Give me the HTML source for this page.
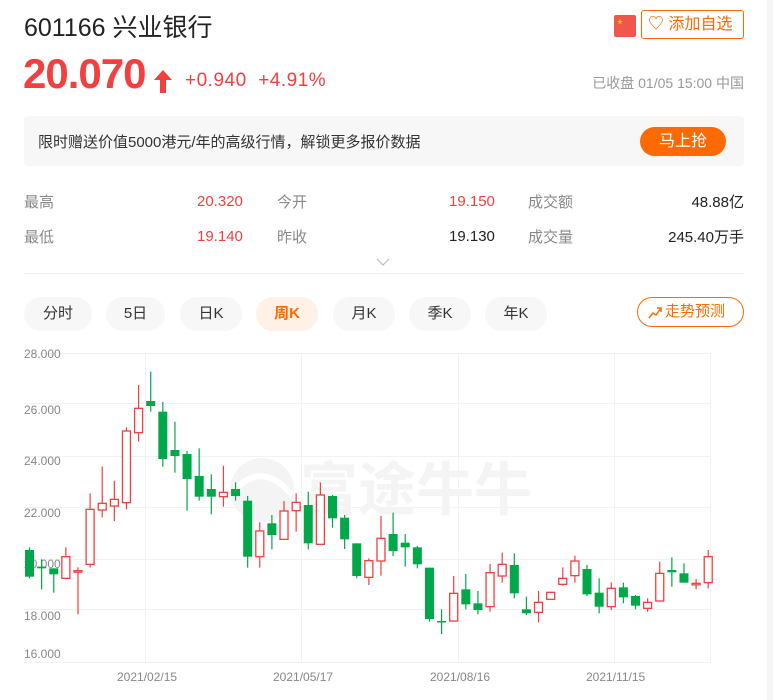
<!DOCTYPE html>
<html><head><meta charset="utf-8"><style>
*{margin:0;padding:0;box-sizing:border-box}
body{width:773px;height:700px;background:#fff;font-family:"Liberation Sans","Noto Sans CJK SC",sans-serif;position:relative;overflow:hidden;color:#333}
.a{position:absolute;white-space:nowrap}
.pill{position:absolute;top:297px;height:34px;border-radius:17px;background:#f7f7f7;font-size:15px;color:#333;text-align:center;line-height:34px}
</style></head><body>
<div style="position:absolute;right:0;top:0;width:6px;height:700px;background:#f5f5f5"></div>
<div class="a" style="left:24px;top:8px;font-size:25px;color:#222">601166 兴业银行</div>
<div class="a" style="left:614px;top:15px;width:22px;height:22px;background:#f0564a;border-radius:2px"><span style="position:absolute;left:3px;top:2px;color:#ffd200;font-size:6px">★</span></div>
<div class="a" style="left:641px;top:10px;width:103px;height:29px;border:1px solid #ff6a00;border-radius:3px;color:#ff6a00;font-size:16px;line-height:27px;padding-left:6px">♡ 添加自选</div>
<div class="a" style="left:23px;top:50px;font-size:42px;font-weight:bold;color:#f23f3f;letter-spacing:-1px">20.070</div>
<svg class="a" style="left:154px;top:70px" width="18" height="23"><path d="M9 0 L18 10 H12 V23 H6 V10 H0 Z" fill="#f23f3f"/></svg>
<div class="a" style="left:185px;top:70px;font-size:19px;color:#f23f3f;letter-spacing:0.5px">+0.940 &nbsp;+4.91%</div>
<div class="a" style="right:29px;top:73px;font-size:14px;color:#999">已收盘 01/05 15:00 中国</div>
<div class="a" style="left:24px;top:116px;width:720px;height:50px;background:#f7f7f7;border-radius:4px"></div>
<div class="a" style="left:38px;top:131px;font-size:15px;color:#333">限时赠送价值5000港元/年的高级行情，解锁更多报价数据</div>
<div class="a" style="left:640px;top:127px;width:86px;height:29px;background:#ff6a00;border-radius:15px;color:#fff;font-size:16px;text-align:center;line-height:29px">马上抢</div>
<div class="a" style="left:24px;top:191px;font-size:15px;color:#888">最高</div>
<div class="a" style="left:24px;top:226px;font-size:15px;color:#888">最低</div>
<div class="a" style="left:197px;top:193px;font-size:15px;color:#f23f3f">20.320</div>
<div class="a" style="left:197px;top:228px;font-size:15px;color:#f23f3f">19.140</div>
<div class="a" style="left:277px;top:191px;font-size:15px;color:#888">今开</div>
<div class="a" style="left:277px;top:226px;font-size:15px;color:#888">昨收</div>
<div class="a" style="left:449px;top:193px;font-size:15px;color:#f23f3f">19.150</div>
<div class="a" style="left:449px;top:228px;font-size:15px;color:#222">19.130</div>
<div class="a" style="left:528px;top:191px;font-size:15px;color:#888">成交额</div>
<div class="a" style="left:528px;top:226px;font-size:15px;color:#888">成交量</div>
<div class="a" style="right:29px;top:191px;font-size:15px;color:#222">48.88亿</div>
<div class="a" style="right:29px;top:226px;font-size:15px;color:#222">245.40万手</div>
<svg class="a" style="left:376px;top:258px" width="14" height="9"><path d="M1 1 L7 7 L13 1" fill="none" stroke="#bbb" stroke-width="1.2"/></svg>
<div class="a" style="left:24px;top:273px;width:720px;height:1px;background:#eee"></div>
<div class="pill" style="left:24px;width:68px">分时</div>
<div class="pill" style="left:106px;width:59px">5日</div>
<div class="pill" style="left:180px;width:62px">日K</div>
<div class="pill" style="left:256px;width:62px;background:#fff1e6;color:#ff6a00;font-weight:bold">周K</div>
<div class="pill" style="left:333px;width:62px">月K</div>
<div class="pill" style="left:409px;width:62px">季K</div>
<div class="pill" style="left:485px;width:62px">年K</div>
<div class="a" style="left:637px;top:297px;width:107px;height:30px;border:1px solid #ff6a00;border-radius:15px;color:#ff6a00;font-size:15px;line-height:28px;padding-left:27px">走势预测</div>
<svg class="a" style="left:648px;top:305px" width="14" height="14"><path d="M1 13 L5 8 L8 10 L13 3 M9 3 H13 V7" fill="none" stroke="#ff6a00" stroke-width="1.5"/></svg>
<svg id="ch" class="a" style="left:0;top:340px" width="773" height="360"></svg>
<script>
var s='';
var H=[13,63,116,167,219,269,322];
H.forEach(function(y){s+='<line x1="24" x2="710" y1="'+(y+.5)+'" y2="'+(y+.5)+'" stroke="#f2f2f2"/>';});
[145,301,458,614,710].forEach(function(x){s+='<line y1="13" y2="322" x1="'+(x+.5)+'" x2="'+(x+.5)+'" stroke="#f2f2f2"/>';});
s+='<circle cx="262" cy="150" r="32" fill="#f4f4f4"/><path d="M235 150 Q262 120 292 155" stroke="#fff" stroke-width="6" fill="none"/>';
s+='<text x="300" y="170" font-size="58" fill="#f4f4f4" font-family="Noto Sans CJK SC,sans-serif" font-weight="bold">富途牛牛</text>';
var L=[["28.000",18],["26.000",74],["24.000",125],["22.000",177],["20.000",228],["18.000",280],["16.000",318]];
L.forEach(function(l){s+='<text x="24" y="'+l[1]+'" font-size="12" fill="#888" font-family="Liberation Sans">'+l[0]+'</text>';});
[["2021/02/15",117],["2021/05/17",273],["2021/08/16",430],["2021/11/15",586]].forEach(function(t){s+='<text x="'+t[1]+'" y="341" font-size="12" fill="#888" font-family="Liberation Sans">'+t[0]+'</text>';});
var D=[
"g,622,715,630,710","g,658,748,680,685","g,685,758,685,703","r,622,718,650,715","r,682,823,692,696","r,460,683,508,673","r,380,532,490,510","r,422,543,478,498","r,262,508,273,488","r,135,305,205,278",
"g,95,215,183,198","g,186,380,215,357","g,245,398,330,348","g,333,512,342,417","g,325,482,408,470","g,403,523,447,470","r,377,500,457,470","g,427,482,447,468","g,468,683,482,650","r,547,683,573,650",
"g,525,628,550,585","r,483,598,513,598","r,460,575,487,512","g,455,628,495,610","r,427,613,465,613","g,465,563,468,535","g,525,627,533,598","g,610,715,610,708","r,655,735,662,712","r,528,707,595,663",
"g,518,648,582,633","g,582,680,608,622","g,618,685,622,673","g,683,845,683,837","g,808,882,843,847","r,708,845,760,843","g,702,808,748,793","g,753,823,790,810","r,672,815,698,800","r,638,728,673,708",
"g,640,775,675,760","g,770,825,808,820","r,753,847,787,817","r,755,778,757,778","r,682,737,715,733","r,647,728,663,707","g,675,768,687,763","g,715,820,758,800","r,727,810,745,800","g,728,790,742,772",
"g,765,808,768,797","r,775,815,787,805","r,665,783,700,783","g,652,740,690,697","g,670,728,700,728","r,717,748,730,733","r,630,745,650,728"];
D.forEach(function(d,i){var p=d.split(',');var c=p[0]=='g'?'#00a84a':'#f23f3f';var x=29.5+12.12*i;
var f=function(v){return (+v)/3;};var wt=f(p[1]),wb=f(p[2]),bt=f(p[3]),bb=f(p[4]);if(bb-bt<1.5){bb=bt+1.5;}
s+='<line x1="'+x+'" x2="'+x+'" y1="'+wt+'" y2="'+wb+'" stroke="'+c+'" stroke-width="1.2"/>';
if(p[0]=='g')s+='<rect x="'+(x-4.5)+'" y="'+bt+'" width="9" height="'+(bb-bt)+'" fill="'+c+'"/>';
else s+='<rect x="'+(x-4)+'" y="'+bt+'" width="8" height="'+(bb-bt)+'" fill="#fff" stroke="'+c+'" stroke-width="1.3"/>';});
document.getElementById('ch').innerHTML=s;
</script>
</body></html>
